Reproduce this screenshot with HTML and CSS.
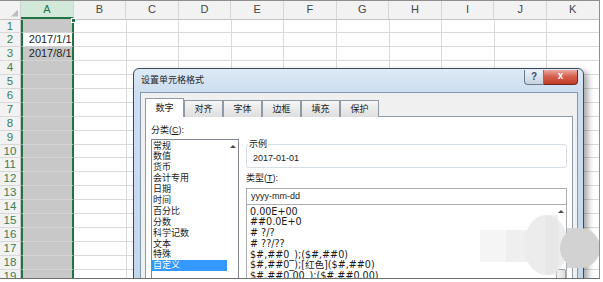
FILE: index.html
```html
<!DOCTYPE html>
<html lang="zh-CN">
<head>
<meta charset="utf-8">
<title>设置单元格格式</title>
<link rel="stylesheet" href="styles.css">
</head>
<body>
<div class="frame">
  <div class="sheet">
    <div class="hdr">
      <div class="corner"><span class="tri"></span></div>
      <div class="ch sel">A</div><div class="ch">B</div><div class="ch">C</div><div class="ch">D</div><div class="ch">E</div><div class="ch">F</div><div class="ch">G</div><div class="ch">H</div><div class="ch">I</div><div class="ch">J</div><div class="ch">K</div>
    </div>
    <div class="row"><div class="rh">1</div><div class="ca"></div><div class="rest"></div></div>
    <div class="row"><div class="rh">2</div><div class="ca act">2017/1/1</div><div class="rest"></div></div>
    <div class="row"><div class="rh">3</div><div class="ca">2017/8/1</div><div class="rest"></div></div>
    <div class="row"><div class="rh">4</div><div class="ca"></div><div class="rest"></div></div>
    <div class="row"><div class="rh">5</div><div class="ca"></div><div class="rest"></div></div>
    <div class="row"><div class="rh">6</div><div class="ca"></div><div class="rest"></div></div>
    <div class="row"><div class="rh">7</div><div class="ca"></div><div class="rest"></div></div>
    <div class="row"><div class="rh">8</div><div class="ca"></div><div class="rest"></div></div>
    <div class="row"><div class="rh">9</div><div class="ca"></div><div class="rest"></div></div>
    <div class="row"><div class="rh">10</div><div class="ca"></div><div class="rest"></div></div>
    <div class="row"><div class="rh">11</div><div class="ca"></div><div class="rest"></div></div>
    <div class="row"><div class="rh">12</div><div class="ca"></div><div class="rest"></div></div>
    <div class="row"><div class="rh">13</div><div class="ca"></div><div class="rest"></div></div>
    <div class="row"><div class="rh">14</div><div class="ca"></div><div class="rest"></div></div>
    <div class="row"><div class="rh">15</div><div class="ca"></div><div class="rest"></div></div>
    <div class="row"><div class="rh">16</div><div class="ca"></div><div class="rest"></div></div>
    <div class="row"><div class="rh">17</div><div class="ca"></div><div class="rest"></div></div>
    <div class="row"><div class="rh">18</div><div class="ca"></div><div class="rest"></div></div>
    <div class="row"><div class="rh">19</div><div class="ca"></div><div class="rest"></div></div>
  </div>
  <div class="handle"></div>

  <div class="dlg">
    <div class="tbar">
      <span class="ttl">设置单元格格式</span>
      <div class="tbtns">
        <div class="hbtn">?</div>
        <div class="xbtn">x</div>
      </div>
    </div>
    <div class="body">
      <div class="tabs">
        <div class="tab on">数字</div>
        <div class="tab">对齐</div>
        <div class="tab">字体</div>
        <div class="tab">边框</div>
        <div class="tab">填充</div>
        <div class="tab">保护</div>
      </div>
      <div class="panel">
        <div class="lcol">
          <div class="lbl">分类(<u>C</u>):</div>
          <div class="lb cat">
            <div class="items">
              <div class="it">常规</div>
              <div class="it">数值</div>
              <div class="it">货币</div>
              <div class="it">会计专用</div>
              <div class="it">日期</div>
              <div class="it">时间</div>
              <div class="it">百分比</div>
              <div class="it">分数</div>
              <div class="it">科学记数</div>
              <div class="it">文本</div>
              <div class="it">特殊</div>
              <div class="it sel">自定义</div>
            </div>
            <div class="sb"><span class="up"></span></div>
          </div>
        </div>
        <div class="rcol">
          <fieldset class="grp">
            <legend>示例</legend>
            <div class="sample">2017-01-01</div>
          </fieldset>
          <div class="lbl lbl2">类型(<u>T</u>):</div>
          <div class="inp">yyyy-mm-dd</div>
          <div class="lb fmt">
            <div class="items">
              <div class="it">0.00E+00</div>
              <div class="it">##0.0E+0</div>
              <div class="it"># ?/?</div>
              <div class="it"># ??/??</div>
              <div class="it">$#,##0_);($#,##0)</div>
              <div class="it">$#,##0_);[红色]($#,##0)</div>
              <div class="it">$#,##0.00_);($#,##0.00)</div>
            </div>
            <div class="sb"><span class="up"></span><span class="thumb"></span></div>
          </div>
        </div>
      </div>
    </div>
  </div>

  <svg class="wm" width="125" height="66" viewBox="0 0 125 66">
    <rect x="2" y="18" width="26" height="32" fill="#f5f5f5"/>
    <rect x="28" y="18" width="26" height="32" fill="#efefef"/>
    <ellipse cx="68" cy="33" rx="22" ry="30" fill="#ececec"/>
    <rect x="68" y="3" width="12" height="60" fill="#e4e4e4" opacity="0.6"/>
    <rect x="89" y="16" width="14" height="40" fill="#d6d6d6"/>
    <circle cx="102" cy="36" r="20" fill="#d2d2d2"/>
  </svg>
</div>
</body>
</html>
```

FILE: styles.css
```css
* { box-sizing: border-box; }

body {
  margin: 0;
  background: #ffffff;
  font-family: "Liberation Sans", Arial, sans-serif;
}

.frame {
  position: relative;
  width: 600px;
  height: 279px;
  border-top: 1px solid #8e8e8e;
  border-right: 1px solid #8e8e8e;
  border-bottom: 1px solid #6e6e6e;
  overflow: hidden;
  background: #ffffff;
}

/* ---------- spreadsheet ---------- */
.sheet {
  display: flex;
  flex-direction: column;
}

.hdr {
  display: flex;
  height: 18.5px;
  flex: none;
  background: #f2f2f2;
  border-bottom: 1px solid #c4c4c4;
}

.corner {
  width: 21px;
  flex: none;
  border-right: 1px solid #d0d0d0;
  display: flex;
  align-items: flex-end;
  justify-content: flex-end;
  padding: 0 2px 2px 0;
}

.tri {
  width: 7px;
  height: 7px;
  background: #bdbdbd;
  clip-path: polygon(100% 0, 100% 100%, 0 100%);
}

.ch {
  width: 52.6px;
  flex: none;
  border-right: 1px solid #d6d6d6;
  text-align: center;
  font-size: 11px;
  line-height: 17.5px;
  color: #444444;
}

.ch.sel {
  background: #d2e9da;
  color: #217346;
  border-bottom: 2px solid #217346;
  line-height: 16.5px;
}

.row {
  display: flex;
  height: 13.9px;
  flex: none;
}

.rh {
  width: 21px;
  flex: none;
  background: #f2f2f2;
  border-right: 1px solid #c4c4c4;
  border-bottom: 1px solid #d8d8d8;
  color: #3a7f58;
  font-size: 11.5px;
  line-height: 13px;
  text-align: center;
}

.ca {
  width: 52.6px;
  flex: none;
  background: #c8c8c8;
  border-left: 2px solid #217346;
  border-right: 2px solid #217346;
  border-bottom: 1px solid #d3d3d3;
  font-size: 11px;
  line-height: 13px;
  text-align: right;
  color: #262626;
  white-space: nowrap;
}

.ca.act { background: #ffffff; }

.rest {
  flex: 1;
  border-bottom: 1px solid #dadada;
  background: repeating-linear-gradient(to right,
    transparent 0, transparent 51.6px,
    #dadada 51.6px, #dadada 52.6px);
}

.handle {
  position: absolute;
  left: 71px;
  top: 16.5px;
  width: 5px;
  height: 5px;
  background: #217346;
  border: 1px solid #ffffff;
}

/* ---------- dialog ---------- */
.dlg {
  position: absolute;
  left: 133px;
  top: 67px;
  width: 451px;
  height: 230px;
  border: 1px solid #3f4a56;
  border-radius: 6px 6px 0 0;
  background: linear-gradient(to bottom, #dde9f6 0, #cddef0 22px, #c3d6ea 100%);
  padding: 0 5px 0 6px;
  box-shadow: 4px 3px 6px rgba(0, 0, 0, 0.35);
  display: flex;
  flex-direction: column;
  font-family: "Liberation Sans", "Noto Sans CJK SC", sans-serif;
  font-size: 9px;
  line-height: 11px;
  color: #1a1a1a;
}

.tbar {
  height: 23px;
  flex: none;
  display: flex;
  align-items: flex-start;
}

.ttl {
  margin-top: 6px;
  padding-left: 1px;
  color: #1c1c1c;
}

.tbtns {
  margin-left: auto;
  display: flex;
  margin-top: 1px;
}

.hbtn {
  width: 20px;
  height: 15px;
  border: 1px solid #6c7c8e;
  border-top: none;
  border-radius: 0 0 0 4px;
  background: linear-gradient(#eef2f7, #c6d2df);
  color: #3a4f66;
  font-size: 10px;
  line-height: 13px;
  text-align: center;
  font-weight: bold;
}

.xbtn {
  width: 34px;
  height: 15px;
  border: 1px solid #6e2a22;
  border-top: none;
  border-left: none;
  border-radius: 0 0 4px 0;
  background: linear-gradient(#eba99c, #d45d48 50%, #c13b26);
  color: #ffffff;
  text-align: center;
  font-weight: bold;
  font-size: 10px;
  line-height: 12px;
}

.body {
  flex: 1;
  background: #f0f0f0;
  border: 1px solid #8498ad;
  padding: 5px 4px 0 4px;
  display: flex;
  flex-direction: column;
}

.tabs {
  display: flex;
  align-items: flex-end;
  height: 19px;
  flex: none;
  margin-bottom: -1px;
  position: relative;
  z-index: 1;
}

.tab {
  width: 39px;
  height: 17px;
  border: 1px solid #8e9aa6;
  border-bottom: none;
  background: linear-gradient(#f6f6f6, #dedede);
  text-align: center;
  line-height: 16px;
}

.tab.on {
  height: 19px;
  background: #ffffff;
  line-height: 18px;
}

.panel {
  flex: 1;
  background: #ffffff;
  border: 1px solid #8e9aa6;
  display: flex;
  gap: 7px;
  padding: 8px 5px 0 5px;
}

.lcol {
  width: 88px;
  flex: none;
  display: flex;
  flex-direction: column;
}

.rcol {
  flex: 1;
  display: flex;
  flex-direction: column;
  min-width: 0;
}

.lbl { line-height: 11px; }

.lb {
  display: flex;
  border: 1px solid #828790;
  background: #ffffff;
}

.cat {
  margin-top: 3px;
  height: 160px;
}

.items {
  flex: 1;
  min-width: 0;
}

.cat .items { padding-top: 0.5px; }

.it {
  height: 10.9px;
  line-height: 10.9px;
  padding-left: 1px;
  white-space: nowrap;
}

.it.sel {
  background: #3399ff;
  color: #ffffff;
}

.sb {
  width: 11px;
  flex: none;
  display: flex;
  flex-direction: column;
  align-items: center;
}

.up {
  width: 0;
  height: 0;
  border-left: 3px solid transparent;
  border-right: 3px solid transparent;
  border-bottom: 3px solid #4a4a4a;
  margin-top: 5px;
}

.thumb {
  width: 10px;
  height: 12px;
  margin-top: 56px;
  border: 1px solid #a0a0a0;
  border-radius: 2px;
  background: linear-gradient(to right, #f4f4f4, #dedede);
}

.grp {
  margin: 14px 0 0 0;
  padding: 3px 5px 3px 6px;
  border: 1px solid #d5dfe5;
  border-radius: 3px;
  min-width: 0;
}

.grp legend {
  padding: 0 1px;
  margin-left: -5px;
  line-height: 11px;
}

.sample { line-height: 11px; }

.lbl2 { margin-top: 5px; }

.inp {
  margin-top: 4px;
  height: 17px;
  flex: none;
  border: 1px solid #abadb3;
  padding-left: 4px;
  line-height: 15px;
}

.fmt {
  margin-top: -1px;
  height: 90px;
  flex: none;
  border-color: #abadb3;
}

.fmt .items {
  padding: 1.5px 0 0 2px;
  font-family: "DejaVu Sans", "Noto Sans CJK SC", sans-serif;
  font-size: 9.6px;
}

.fmt .it {
  height: 10.8px;
  line-height: 10.8px;
}

/* ---------- watermark ---------- */
.wm {
  position: absolute;
  left: 478px;
  top: 211px;
}
```
